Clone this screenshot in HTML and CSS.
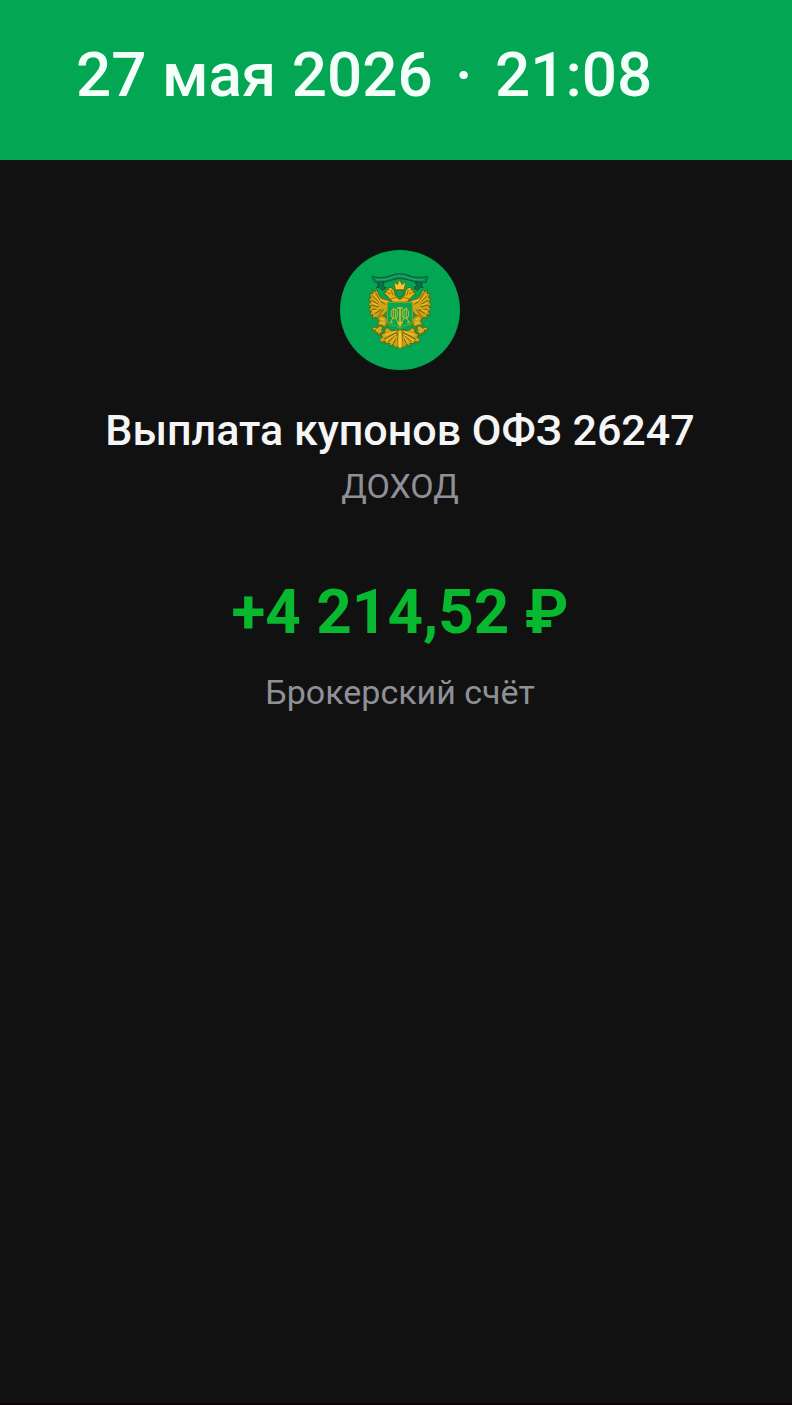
FILE: index.html
```html
<!DOCTYPE html>
<html lang="ru">
<head>
	<meta charset="utf-8">
	<meta name="viewport" content="width=device-width, initial-scale=1">
	<title>Выплата купонов</title>
	<link rel="stylesheet" href="styles.css">
</head>
<body>
	<header>
		<time datetime="2026-05-27T21:08">27 мая 2026 <span class="dot">·</span> 21:08</time>
	</header>
	<main>
		<!-- Issuer emblem -->
		<svg class="logo" viewBox="30 30 360 360" aria-hidden="true">
			<defs>
				<!-- Left half of the eagle, mirrored below -->
				<g id="half">
					<path fill="#cfa416" stroke="#5c4a08" stroke-width="2" d="M188 188 L168 178 Q150 178 147 162 L139 149 L134 157 L126 149 L128 161 L118 161 L124 173 L116 177 L123 186 L115 193 L123 200 L116 210 L124 213 L119 225 L129 224 L127 235 L139 231 L145 238 L155 230 L164 222 L172 212 L173 199 L182 196 Z"/>
					<path fill="none" stroke="#7d620c" stroke-width="3" d="M127 166 L145 184 M124 181 L146 193 M123 195 L148 201 M126 208 L150 208 M134 221 L155 209 M138 159 L151 184 M153 185 L166 193 M143 230 L161 208"/>
					<path fill="none" stroke="#f0c92f" stroke-width="3" d="M130 163 L149 184 M126 188 L146 197 M129 216 L151 203 M151 179 L176 187"/>
					<path fill="#dfb11b" stroke="#5c4a08" stroke-width="2" d="M192 182 L178 176 L170 166 L161 160 L171 156 L165 149 L176 150 L174 142 L185 143 L193 153 L195 166 L204 173 L202 184 Z"/>
					<path fill="none" stroke="#55490c" stroke-width="2" d="M174 159 L182 160 M184 151 L189 166"/>
					<path fill="#cda214" stroke="#5c4a08" stroke-width="2" d="M143 236 L153 226 L163 229 L171 237 L171 253 L164 261 L154 256 L140 254 L148 244 Z"/>
					<path fill="none" stroke="#f5cf37" stroke-width="3" d="M151 235 L162 240 M150 248 L164 249"/>
					<path fill="#d9ad18" stroke="#5c4a08" stroke-width="2" d="M129 260 L141 265 L150 257 L159 263 L154 271 L162 277 L150 279 L146 288 L142 276 L134 281 L137 271 L126 270 Z"/>
					<path fill="#cfa417" stroke="#5c4a08" stroke-width="2" d="M202 270 L184 272 L173 263 L164 268 L165 277 L153 284 L158 292 L148 298 L154 307 L166 304 L166 312 L178 309 L180 319 L189 313 L196 323 L204 319 L209 274 Z"/>
					<path fill="none" stroke="#6f580c" stroke-width="3" d="M200 277 L161 298 M202 279 L175 305 M204 279 L190 311"/>
					<path fill="none" stroke="#f3cd34" stroke-width="3" d="M197 275 L165 286 M199 282 L168 303 M203 286 L184 309 M205 286 L200 314"/>
				</g>
				<g id="ribbon">
					<path fill="#087b49" stroke="#075034" stroke-width="3" d="M142 125 L163 128 L158 137 L167 143 L157 151 L148 142 L140 143 L145 135 Z"/>
					<path fill="none" stroke="#075034" stroke-width="2" d="M147 133 L158 142"/>
				</g>
				<g id="letter" fill="none" stroke="#cdb92e" stroke-width="3">
					<ellipse cx="193" cy="221" rx="10" ry="14"/>
					<path d="M190 203 V238 M197 207 V238 M188 235 L182 247 M179 247 H188 M198 235 L204 246"/>
				</g>
			</defs>
			<circle cx="210" cy="210" r="180" fill="#02a653"/>
			<use href="#ribbon"/>
			<use href="#ribbon" transform="matrix(-1 0 0 1 419 0)"/>
			<path fill="#098b50" stroke="#075a39" stroke-width="3" d="M126 109 Q158 117 179 108 Q210 94 240 108 Q260 116 293 109 L288 127 Q254 128 231 119 Q210 111 190 119 Q165 129 133 126 Z"/>
			<path fill="none" stroke="#69b88b" stroke-width="3" stroke-dasharray="3 2" d="M138 119 Q167 121 187 112 Q210 103 232 112 Q252 121 282 119"/>
			<use href="#half"/>
			<use href="#half" transform="matrix(-1 0 0 1 419 0)"/>
			<!-- Crown -->
			<path fill="#f5c72d" stroke="#705307" stroke-width="2" d="M196 149 L192 125 L202 134 L209 119 L216 134 L227 125 L222 149 Z"/>
			<path fill="#02a653" stroke="#705307" stroke-width="2" d="M197 153 Q209 149 222 153 L219 164 L210 171 L200 164 Z"/>
			<path fill="#e9b91c" stroke="#705307" stroke-width="2" d="M181 177 L200 172 L209 179 L220 172 L238 177 L231 186 L188 186 Z"/>
			<!-- Shield with monogram -->
			<path fill="#02a653" stroke="#92a126" stroke-width="3" d="M172 187 H247 V244 Q247 252 238 253 Q220 255 210 265 Q199 255 181 253 Q172 251 172 243 Z"/>
			<use href="#letter"/>
			<use href="#letter" transform="matrix(-1 0 0 1 419 0)"/>
			<path fill="none" stroke="#e3b923" stroke-width="5" d="M201 204 H218 M210 202 V252 M203 246 L210 257 L217 246"/>
			<path fill="#e4b61b" stroke="#6d5509" stroke-width="2" d="M204 274 L210 267 L216 274 L219 318 L210 328 L201 318 Z"/>
			<path fill="none" stroke="#fbd848" stroke-width="3" d="M210 276 V318"/>
		</svg>
		<h1>Выплата купонов ОФЗ 26247</h1>
		<p class="type">ДОХОД</p>
		<p class="amount">+4 214,52 ₽</p>
		<p class="account">Брокерский счёт</p>
	</main>
</body>
</html>
```
FILE: styles.css
```css
/* General styles */
* {
	box-sizing: border-box;
}

body {
	display: flex;
	flex-direction: column;
	min-height: 100vh;
	margin: 0;
	background-color: #111;
	border-bottom: 2px solid #0d0408;
	color: #f5f5f5;
	font-family: Roboto, sans-serif;
}

header {
	padding: 35px 76px 45px;
	background-color: #02a653;
	color: #f5fffa;
	font-size: 62px;
	font-weight: 500;
	line-height: 80px;
}

header time {
	display: block;
}

.dot {
	margin: 0 7px;
}

/* Payment details */
main {
	display: flex;
	flex-direction: column;
	align-items: center;
	padding: 90px 0 0 8px;
	text-align: center;
}

.logo {
	width: 120px;
	height: 120px;
}

h1,
p {
	margin: 0;
}

h1 {
	margin-top: 32px;
	font-size: 43px;
	font-weight: 500;
	line-height: 56px;
}

.type,
.account {
	color: #8f9097;
	font-size: 34px;
	line-height: 56px;
}

.amount {
	margin-top: 58px;
	color: #08b82f;
	font-size: 62px;
	font-weight: 700;
	line-height: 80px;
}

.account {
	margin-top: 12px;
}
```
